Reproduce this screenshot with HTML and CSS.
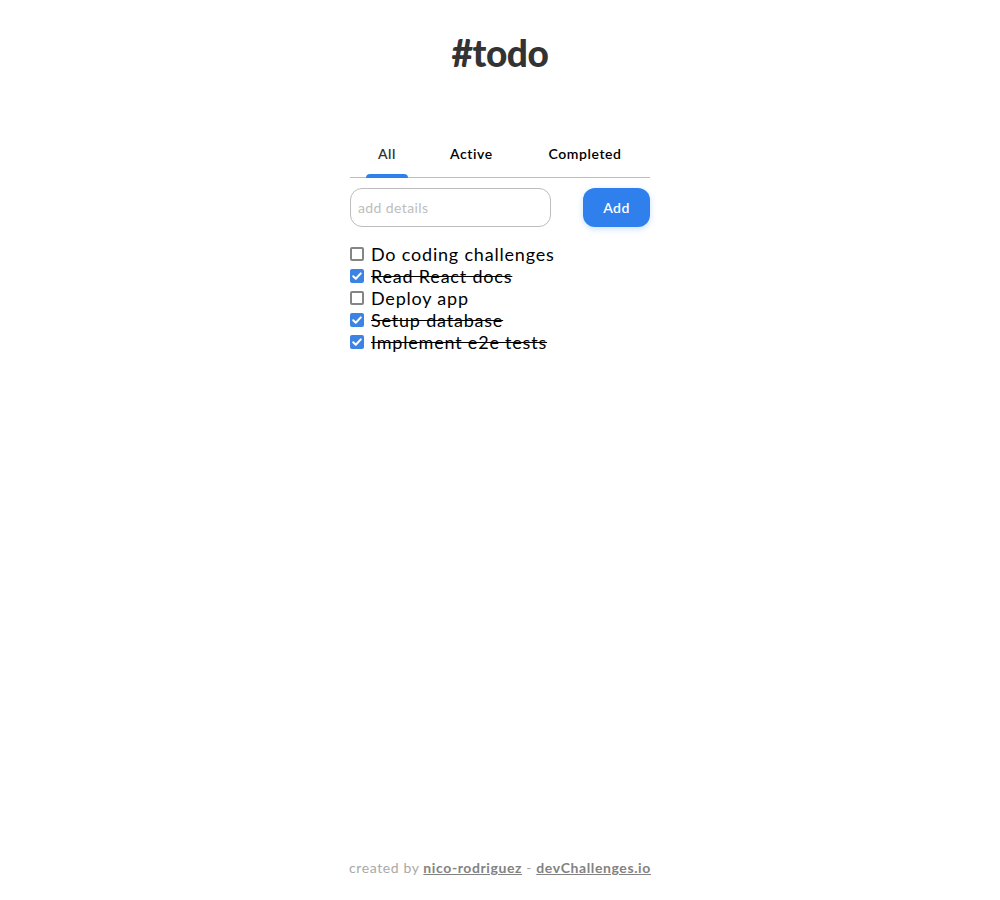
FILE: index.html
```html
<!DOCTYPE html>
<html lang="en">
<head>
<meta charset="utf-8">
<title>#todo</title>
<link rel="stylesheet" href="styles.css">
</head>
<body>
<div class="page">
  <main class="app">
    <h1 class="title">#todo</h1>
    <nav class="tabs">
      <div class="tab tab-active">All</div>
      <div class="tab">Active</div>
      <div class="tab">Completed</div>
    </nav>
    <form class="add-form">
      <input class="add-input" type="text" placeholder="add details">
      <button class="add-btn" type="button">Add</button>
    </form>
    <ul class="list">
      <li class="item"><input type="checkbox" class="check"><span class="label">Do coding challenges</span></li>
      <li class="item done"><input type="checkbox" class="check" checked><span class="label">Read React docs</span></li>
      <li class="item"><input type="checkbox" class="check"><span class="label">Deploy app</span></li>
      <li class="item done"><input type="checkbox" class="check" checked><span class="label">Setup database</span></li>
      <li class="item done"><input type="checkbox" class="check" checked><span class="label">Implement e2e tests</span></li>
    </ul>
  </main>
  <footer class="footer">created by <a class="footer-link" href="#">nico-rodriguez</a> - <a class="footer-link" href="#">devChallenges.io</a></footer>
</div>
</body>
</html>
```

FILE: styles.css
```css
* { box-sizing: border-box; }
html, body { margin: 0; padding: 0; background: #fff; }
body { font-family: "Lato", "Noto Sans", sans-serif; color: #000; }
.page { min-height: 900px; display: flex; flex-direction: column; align-items: center; }
.app { width: 300px; display: flex; flex-direction: column; flex: 1; }
.title {
  margin: 32px 0 0; text-align: center; font-size: 37px; font-weight: 900;
  letter-spacing: -0.4px; color: #333; line-height: 42px;
}
.tabs {
  margin-top: 65px; display: flex; border-bottom: 1px solid #bdbdbd; height: 39px;
  padding-left: 16px;
}
.tab {
  font-size: 14px; font-weight: 600; color: #000; text-align: center;
  padding-top: 6px; position: relative; letter-spacing: 0.6px;
}
.tab:nth-child(1) { width: 42px; }
.tab:nth-child(2) { width: 42px; margin-left: 42px; }
.tab:nth-child(3) { width: 88px; margin-left: 49px; }
.tab-active { color: #333; }
.tab-active::after {
  content: ""; position: absolute; left: 0; right: 0; bottom: -1px; height: 4px;
  background: #2f80ed; border-radius: 4px 4px 0 0;
}
.add-form { display: flex; justify-content: space-between; margin-top: 10px; }
.add-input {
  width: 201px; height: 39px; border: 1px solid #bdbdbd; border-radius: 12px;
  padding: 0 7px; font-family: inherit; font-size: 14px; color: #333; outline: none;
  letter-spacing: 0.4px;
}
.add-input::placeholder { color: #bdbdbd; }
.add-btn {
  width: 67px; height: 39px; border: none; border-radius: 12px; background: #2f80ed;
  color: #fff; font-family: inherit; font-size: 14px; font-weight: 600; letter-spacing: 0.4px;
  box-shadow: 0 2px 6px rgba(127, 177, 243, 0.4);
}
.list { list-style: none; margin: 16px 0 0; padding: 0; }
.item { display: flex; align-items: center; height: 22px; font-size: 18px; letter-spacing: 0.8px; }
.check {
  appearance: none; -webkit-appearance: none; width: 14px; height: 14px; margin: 0 7px 0 0;
  border: 2px solid #858585; border-radius: 2px; background: #fff;
}
.check:checked {
  border: none; background-color: #3b84e6; border-radius: 2px;
  background-image: url("data:image/svg+xml,%3Csvg xmlns='http://www.w3.org/2000/svg' viewBox='0 0 14 14'%3E%3Cpath d='M3.2 7.2l2.6 2.6 5-5.4' fill='none' stroke='%23fff' stroke-width='2' stroke-linecap='round' stroke-linejoin='round'/%3E%3C/svg%3E");
  background-size: 14px 14px;
}
.done .label { text-decoration: line-through; }
.footer { font-size: 14px; color: #a9a9a9; padding-bottom: 24px; line-height: 17px; letter-spacing: 0.6px; }
.footer-link { color: #828282; font-weight: 700; text-decoration: underline; }
```
